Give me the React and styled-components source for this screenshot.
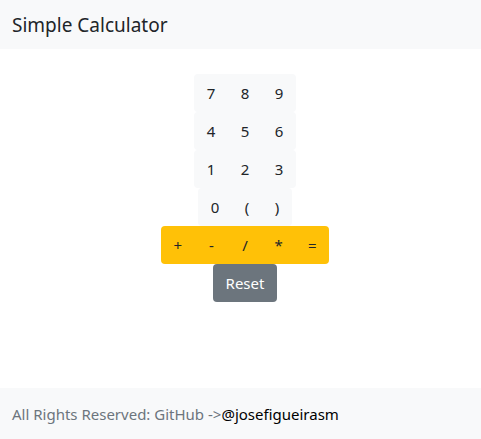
import React, { useState } from 'react';
import styled, { createGlobalStyle } from 'styled-components';

const GlobalStyle = createGlobalStyle`
  html, body {
    margin: 0;
    padding: 0;
  }
  body {
    font-family: "Noto Sans", "Open Sans", sans-serif;
    color: #212529;
    background: #fff;
  }
`;

const Page = styled.div`
  display: flex;
  flex-direction: column;
  min-height: 100vh;
`;

const Navbar = styled.nav`
  height: 49px;
  background: #f8f9fa;
  display: flex;
  align-items: center;
  padding: 0 12px;
`;

const Brand = styled.span`
  font-size: 19px;
  color: #212529;
`;

const Main = styled.main`
  flex: 1;
  display: flex;
  flex-direction: column;
  align-items: center;
  padding: 25px 0 0 9px;
`;

const Group = styled.div`
  display: flex;
  & > button:first-child {
    border-top-left-radius: 4px;
    border-bottom-left-radius: 4px;
  }
  & > button:last-child {
    border-top-right-radius: 4px;
    border-bottom-right-radius: 4px;
  }
`;

const Key = styled.button`
  border: none;
  border-radius: 0;
  margin: 0;
  height: 38px;
  width: ${(p) => p.$w || 34}px;
  padding: 0;
  font-family: inherit;
  font-size: 15px;
  cursor: pointer;
  background: ${(p) => (p.$variant === 'warning' ? '#ffc107' : '#f8f9fa')};
  color: #212529;
`;

const ResetButton = styled.button`
  border: none;
  border-radius: 4px;
  width: 64px;
  height: 38px;
  font-family: inherit;
  font-size: 15px;
  background: #6c757d;
  color: #fff;
  cursor: pointer;
`;

const Footer = styled.footer`
  height: 51px;
  background: #f8f9fa;
  display: flex;
  align-items: center;
  padding: 0 12px;
  font-size: 15px;
  color: #6c757d;
`;

const Handle = styled.span`
  color: #000;
`;

const rows = [
  ['7', '8', '9'],
  ['4', '5', '6'],
  ['1', '2', '3'],
];

export default function App() {
  const [expr, setExpr] = useState('');
  const press = (k) => setExpr(expr + k);

  return (
    <Page>
      <GlobalStyle />
      <Navbar>
        <Brand>Simple Calculator</Brand>
      </Navbar>
      <Main>
        {rows.map((row) => (
          <Group key={row.join('')}>
            {row.map((k) => (
              <Key key={k} onClick={() => press(k)}>{k}</Key>
            ))}
          </Group>
        ))}
        <Group>
          <Key $w={34} onClick={() => press('0')}>0</Key>
          <Key $w={30} onClick={() => press('(')}>(</Key>
          <Key $w={30} onClick={() => press(')')}>)</Key>
        </Group>
        <Group>
          {['+', '-', '/', '*', '='].map((k) => (
            <Key key={k} $w={33.6} $variant="warning" onClick={() => press(k)}>{k}</Key>
          ))}
        </Group>
        <ResetButton onClick={() => setExpr('')}>Reset</ResetButton>
      </Main>
      <Footer>
        All Rights Reserved: GitHub -&gt;<Handle>@josefigueirasm</Handle>
      </Footer>
    </Page>
  );
}
